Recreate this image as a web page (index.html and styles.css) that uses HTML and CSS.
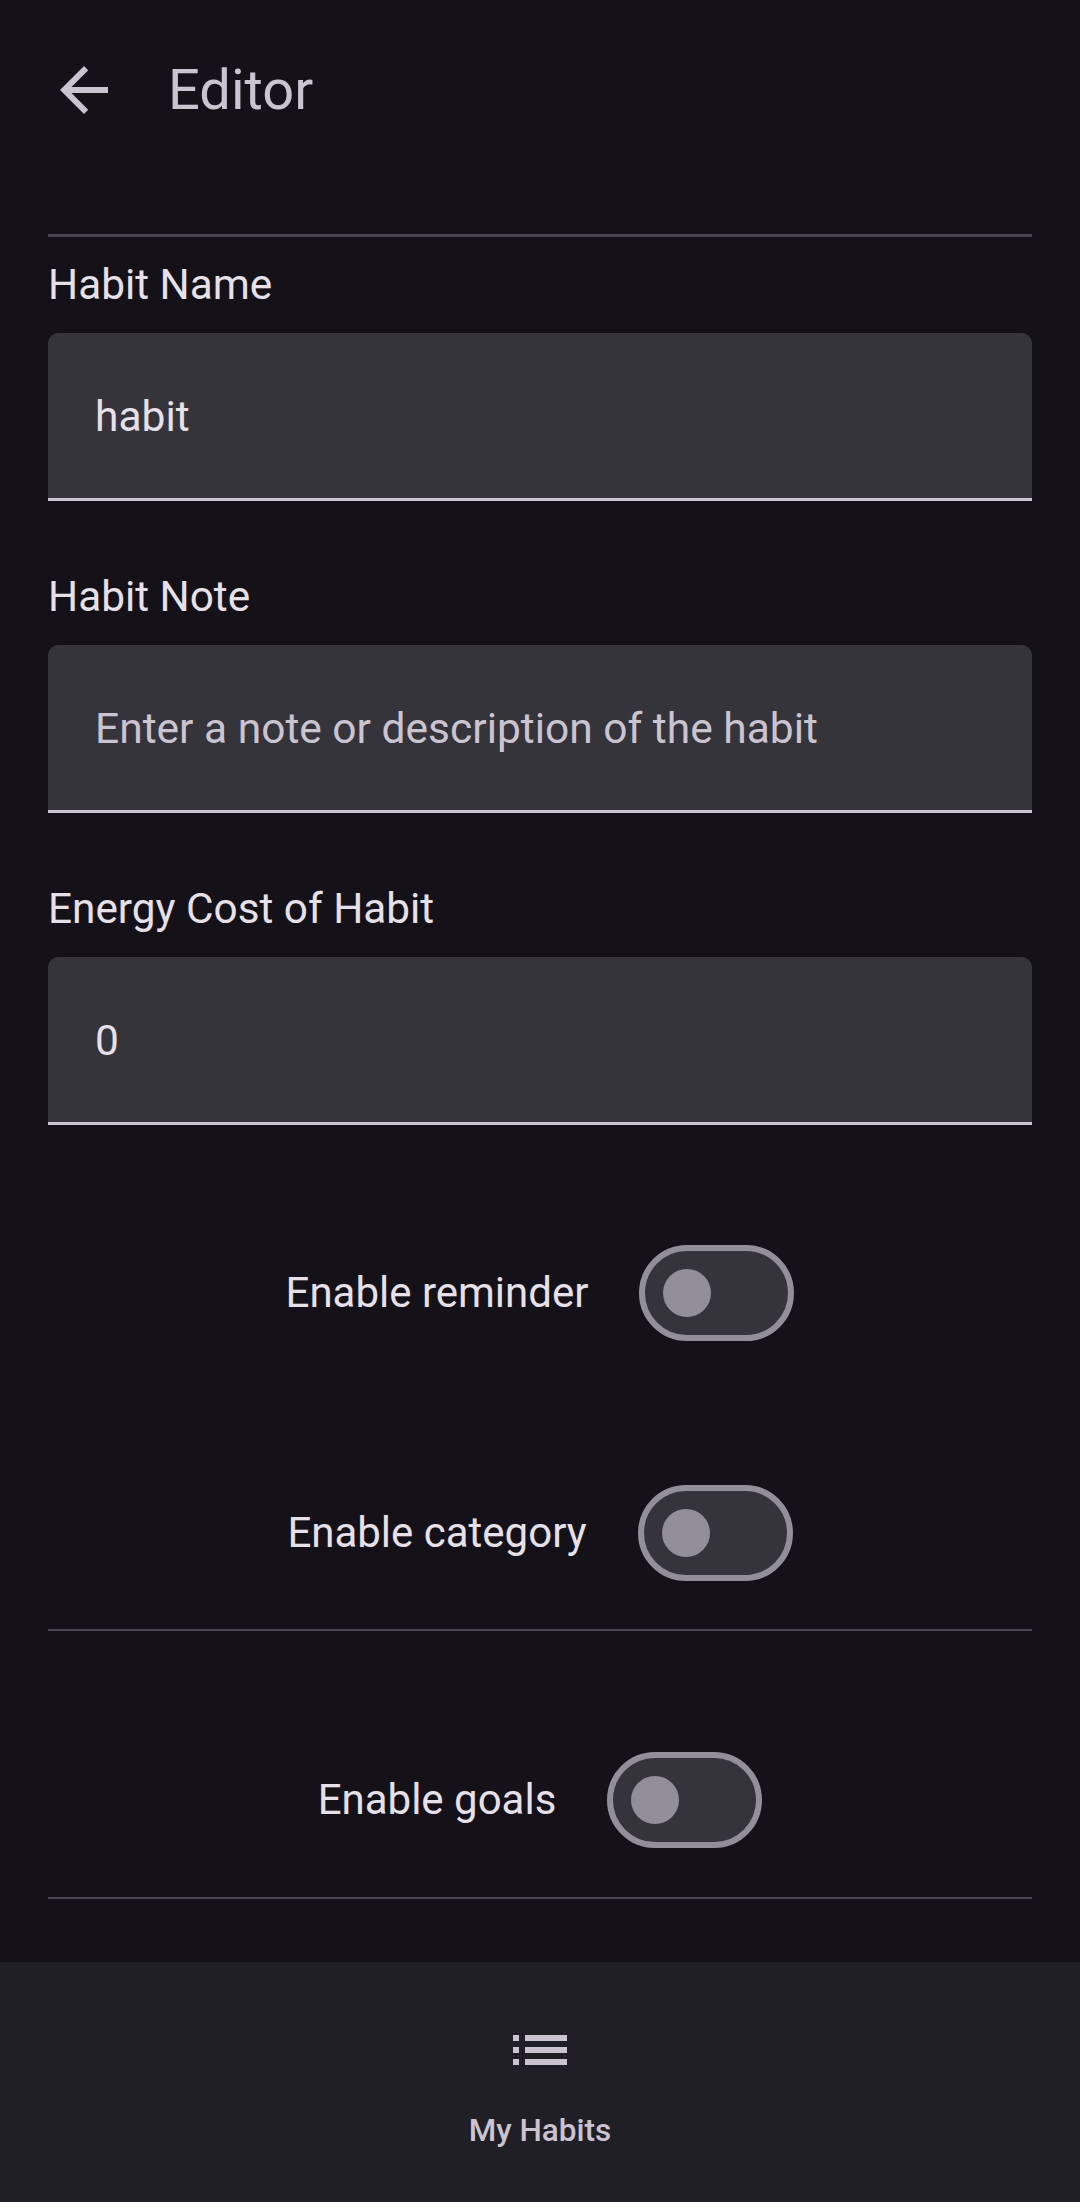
FILE: index.html
```html
<!DOCTYPE html>
<html lang="en">
<head>
<meta charset="utf-8">
<title>Editor</title>
<link rel="stylesheet" href="styles.css">
</head>
<body>
<div class="screen">
  <header class="topbar">
    <svg class="back-icon" viewBox="0 0 24 24" aria-hidden="true">
      <path d="M20 11H7.83l5.59-5.59L12 4l-8 8 8 8 1.41-1.41L7.83 13H20v-2z"/>
    </svg>
    <h1 class="title">Editor</h1>
  </header>

  <main class="content">
    <div class="divider divider-top"></div>

    <div class="field-group">
      <label class="field-label">Habit Name</label>
      <div class="field"><span class="field-value">habit</span></div>
    </div>

    <div class="field-group">
      <label class="field-label">Habit Note</label>
      <div class="field"><span class="field-placeholder">Enter a note or description of the habit</span></div>
    </div>

    <div class="field-group">
      <label class="field-label">Energy Cost of Habit</label>
      <div class="field"><span class="field-value">0</span></div>
    </div>

    <div class="toggle-row row-reminder">
      <span class="toggle-label">Enable reminder</span>
      <span class="switch"><span class="thumb"></span></span>
    </div>

    <div class="toggle-row row-category">
      <span class="toggle-label">Enable category</span>
      <span class="switch"><span class="thumb"></span></span>
    </div>

    <div class="divider divider-thin"></div>

    <div class="toggle-row row-goals">
      <span class="toggle-label">Enable goals</span>
      <span class="switch"><span class="thumb"></span></span>
    </div>

    <div class="divider divider-thin divider-last"></div>
  </main>

  <nav class="bottom-nav">
    <div class="nav-item">
      <svg class="nav-icon" viewBox="0 0 24 24" aria-hidden="true">
        <path d="M3 13h2v-2H3v2zm0 4h2v-2H3v2zm0-8h2V7H3v2zm4 4h14v-2H7v2zm0 4h14v-2H7v2zM7 7v2h14V7H7z"/>
      </svg>
      <span class="nav-label">My Habits</span>
    </div>
  </nav>
</div>
</body>
</html>
```

FILE: styles.css
```css
* {
  box-sizing: border-box;
}

html, body {
  margin: 0;
  padding: 0;
  background: #141218;
}

body {
  font-family: Roboto, "Noto Sans", "Liberation Sans", sans-serif;
  color: #e6e0e9;
}

.screen {
  width: 1080px;
  height: 2202px;
  display: flex;
  flex-direction: column;
  background: #141218;
}

.topbar {
  height: 180px;
  display: flex;
  align-items: center;
  padding-left: 48px;
  gap: 48px;
  flex-shrink: 0;
}

.back-icon {
  width: 72px;
  height: 72px;
  fill: #cac4d0;
}

.title {
  margin: 0;
  font-size: 56px;
  font-weight: 400;
  line-height: 72px;
  color: #cac4d0;
}

.content {
  flex: 1;
  padding: 0 48px;
  display: flex;
  flex-direction: column;
}

.divider {
  height: 3px;
  background: #49454f;
}

.divider-top {
  margin-top: 54px;
}

.divider-thin {
  height: 2px;
  margin-top: 48px;
}

.divider-last {
  margin-top: 49px;
}

.field-group {
  display: flex;
  flex-direction: column;
  margin-top: 68px;
}

.divider-top + .field-group {
  margin-top: 20px;
}

.field-label {
  font-size: 42.3px;
  line-height: 56px;
  color: #e6e0e9;
}

.field {
  margin-top: 20px;
  height: 168px;
  background: #36343b;
  border-radius: 10px 10px 0 0;
  border-bottom: 3px solid #cac4d0;
  display: flex;
  align-items: center;
  padding: 3px 0 0 47px;
}

.field-value,
.field-placeholder {
  font-size: 42.5px;
  line-height: 56px;
}

.field-value {
  color: #e6e0e9;
}

.field-placeholder {
  color: #cac4d0;
}

.toggle-row {
  display: flex;
  justify-content: center;
  align-items: center;
  gap: 51px;
  height: 96px;
}

.row-reminder {
  margin-top: 120px;
}

.row-category {
  margin-top: 144px;
}

.row-goals {
  margin-top: 121px;
}

.toggle-label {
  font-size: 42px;
  line-height: 56px;
  color: #e6e0e9;
}

.switch {
  width: 155px;
  height: 96px;
  border: 6px solid #938f99;
  border-radius: 48px;
  background: #36343b;
  display: flex;
  align-items: center;
  padding-left: 18px;
}

.thumb {
  width: 48px;
  height: 48px;
  border-radius: 50%;
  background: #938f99;
}

.bottom-nav {
  height: 240px;
  flex-shrink: 0;
  background: #211f26;
  display: flex;
  justify-content: center;
  padding-top: 52px;
}

.nav-item {
  display: flex;
  flex-direction: column;
  align-items: center;
}

.nav-icon {
  width: 72px;
  height: 72px;
  fill: #cac4d0;
}

.nav-label {
  margin-top: 25px;
  font-size: 31.5px;
  line-height: 40px;
  font-weight: 500;
  color: #cac4d0;
}
```
